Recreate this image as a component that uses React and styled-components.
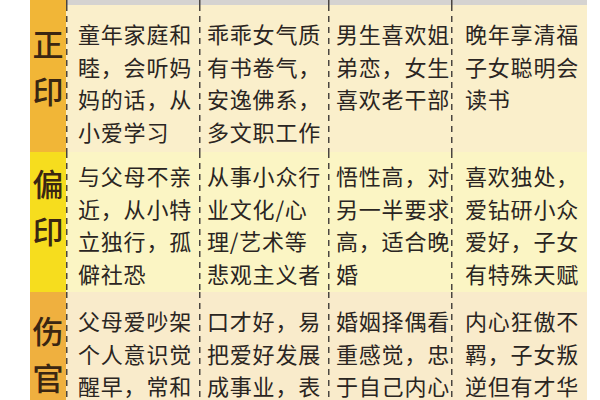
import { Fragment } from 'react';
import styled, { createGlobalStyle } from 'styled-components';

const GlobalStyle = createGlobalStyle`
  html, body {
    margin: 0;
    padding: 0;
    background: #fff;
    overflow: hidden;
  }
  body {
    font-family: "Noto Sans CJK SC", "Noto Sans", sans-serif;
  }
`;

const Table = styled.div`
  margin-left: 30px;
  width: 557px;
  height: 400px;
  overflow: hidden;
  display: grid;
  grid-template-columns: 36px 133px 129px 123px 136px;
  grid-template-rows: 5px 147px 140px 108px;
`;

const dash = `repeating-linear-gradient(to bottom, #4a4540 0 6px, transparent 6px 11px)`;

const Label = styled.div`
  background: ${p => p.$bg};
  color: #3a2612;
  font-size: 31px;
  font-weight: 500;
  line-height: 47px;
  text-align: center;
  padding-top: ${p => p.$top}px;
  overflow: hidden;
`;

const Cell = styled.div`
  background-color: ${p => p.$bg};
  background-image: ${dash};
  background-size: 1.5px 100%;
  background-repeat: no-repeat;
  color: #2a2522;
  font-size: 22px;
  letter-spacing: 0.8px;
  line-height: 32.5px;
  padding-top: ${p => p.$top}px;
  padding-left: ${p => p.$indent}px;
  white-space: pre-line;
  overflow: hidden;
`;

const TopStrip = styled.div`
  background-color: #d5d3d1;
  background-image: ${dash};
  background-size: 1.5px 100%;
  background-repeat: no-repeat;
`;

const indents = [12, 8, 8, 14];

const rows = [
  {
    label: ['正', '印'],
    head: '#f1b637',
    bg: '#faefcb',
    top: 12,
    labelTop: 14,
    cells: [
      '童年家庭和\n睦，会听妈\n妈的话，从\n小爱学习',
      '乖乖女气质\n有书卷气，\n安逸佛系，\n多文职工作',
      '男生喜欢姐\n弟恋，女生\n喜欢老干部',
      '晚年享清福\n子女聪明会\n读书',
    ],
  },
  {
    label: ['偏', '印'],
    head: '#f6dd1e',
    bg: '#fbf5c4',
    top: 7,
    labelTop: 7,
    cells: [
      '与父母不亲\n近，从小特\n立独行，孤\n僻社恐',
      '从事小众行\n业文化/心\n理/艺术等\n悲观主义者',
      '悟性高，对\n另一半要求\n高，适合晚\n婚',
      '喜欢独处，\n爱钻研小众\n爱好，子女\n有特殊天赋',
    ],
  },
  {
    label: ['伤', '官'],
    head: '#efb03f',
    bg: '#f9ebcb',
    top: 12,
    labelTop: 14,
    cells: [
      '父母爱吵架\n个人意识觉\n醒早，常和',
      '口才好，易\n把爱好发展\n成事业，表',
      '婚姻择偶看\n重感觉，忠\n于自己内心',
      '内心狂傲不\n羁，子女叛\n逆但有才华',
    ],
  },
];

export default function App() {
  return (
    <>
      <GlobalStyle />
      <Table>
        <Label $bg="#f1b637" $top={0} />
        {indents.map((_, i) => (
          <TopStrip key={`top_${i}`} />
        ))}
        {rows.map((row, r) => (
          <Fragment key={`row_${r}`}>
            <Label $bg={row.head} $top={row.labelTop}>
              {row.label.map((ch, k) => (
                <div key={k}>{ch}</div>
              ))}
            </Label>
            {row.cells.map((text, c) => (
              <Cell key={`cell_${r}_${c}`} $bg={row.bg} $top={row.top} $indent={indents[c]}>
                {text}
              </Cell>
            ))}
          </Fragment>
        ))}
      </Table>
    </>
  );
}
